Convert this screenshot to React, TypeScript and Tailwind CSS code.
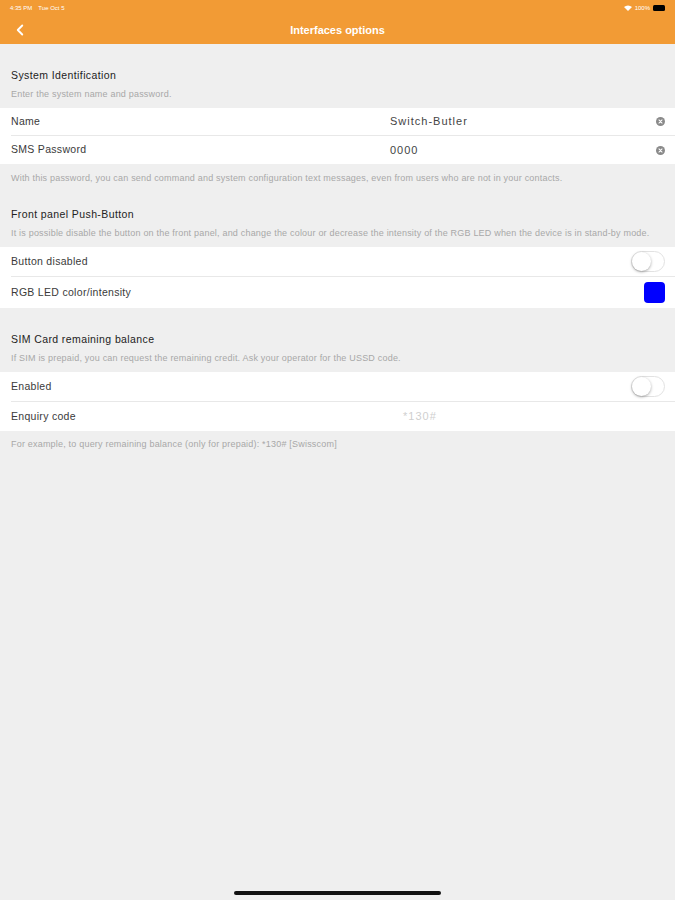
import { ChevronLeft } from 'lucide-react';

const font = { fontFamily: '"Liberation Sans", Arial, sans-serif' };

function ClearIcon() {
  return (
    <svg width="9" height="9" viewBox="0 0 10 10">
      <circle cx="5" cy="5" r="5" fill="#8a8a8a" />
      <path d="M3.3 3.3 L6.7 6.7 M6.7 3.3 L3.3 6.7" stroke="#fff" strokeWidth="1.2" strokeLinecap="round" />
    </svg>
  );
}

function Toggle() {
  return (
    <div className="w-[34px] h-[21px] rounded-full border border-[#e2e2e2] bg-white relative">
      <div className="absolute left-0 top-0 w-[19px] h-[19px] rounded-full bg-white shadow-[0_1px_3px_rgba(0,0,0,0.35)]" />
    </div>
  );
}

function Header({ title, sub, top = 'pt-[24px]', bottom = 'pb-[8px]' }: { title: string; sub: string; top?: string; bottom?: string }) {
  return (
    <div className={`px-[11px] ${top} ${bottom}`}>
      <div className="text-[10.5px] leading-[14px] tracking-[0.4px] text-[#222] font-medium">{title}</div>
      <div className="mt-[6px] text-[9px] leading-[12px] tracking-[0.2px] text-[#a8a8a8] whitespace-nowrap">{sub}</div>
    </div>
  );
}

function Row({ label, h, divider, children }: { label: string; h: string; divider?: boolean; children?: React.ReactNode }) {
  return (
    <div className={`bg-white pl-[11px] ${h}`}>
      <div className={`h-full flex items-center pr-[10px] ${divider ? 'border-b border-[#e8e8e8]' : ''}`}>
        <div className="w-[379px] text-[10.5px] tracking-[0.3px] text-[#3a3a3a]">{label}</div>
        <div className="flex-1 flex items-center justify-between">{children}</div>
      </div>
    </div>
  );
}

function App() {
  return (
    <div className="min-h-[900px] bg-[#efefef] flex flex-col" style={font}>
      {/* status + nav */}
      <div className="bg-[#f29b35]">
        <div className="h-[16px] flex items-center justify-between px-[10px] text-[6px] text-white">
          <div className="flex gap-[6px]">
            <span>4:35 PM</span>
            <span>Tue Oct 5</span>
          </div>
          <div className="flex items-center gap-[3px]">
            <svg width="8" height="6" viewBox="0 0 8 6">
              <path d="M4 6 L0 2 A6 6 0 0 1 8 2 Z" fill="#fff" />
            </svg>
            <span>100%</span>
            <div className="w-[12px] h-[6px] rounded-[1.5px] bg-black" />
          </div>
        </div>
        <div className="h-[28px] relative flex items-center justify-center">
          <ChevronLeft className="absolute left-[11px] text-white" size={18} strokeWidth={2.5} />
          <span className="text-[11px] font-bold text-white">Interfaces options</span>
        </div>
      </div>

      <Header title="System Identification" sub="Enter the system name and password." />
      <Row label="Name" h="h-[28px]" divider>
        <span className="text-[11px] tracking-[1px] text-[#444]">Switch-Butler</span>
        <ClearIcon />
      </Row>
      <Row label="SMS Password" h="h-[28px]">
        <span className="text-[11px] tracking-[1px] text-[#444]">0000</span>
        <ClearIcon />
      </Row>
      <div className="px-[11px] pt-[8px] text-[9px] leading-[12px] tracking-[0.2px] text-[#a8a8a8] whitespace-nowrap">
        With this password, you can send command and system configuration text messages, even from users who are not in your contacts.
      </div>

      <Header
        title="Front panel Push-Button"
        sub="It is possible disable the button on the front panel, and change the colour or decrease the intensity of the RGB LED when the device is in stand-by mode."
        top="pt-[23px]"
      />
      <Row label="Button disabled" h="h-[30px]" divider>
        <span />
        <Toggle />
      </Row>
      <Row label="RGB LED color/intensity" h="h-[31px]">
        <span />
        <div className="w-[21px] h-[21px] rounded-[4px] bg-[#0000ff]" />
      </Row>

      <Header
        title="SIM Card remaining balance"
        sub="If SIM is prepaid, you can request the remaining credit. Ask your operator for the USSD code."
      />
      <Row label="Enabled" h="h-[30px]" divider>
        <span />
        <Toggle />
      </Row>
      <Row label="Enquiry code" h="h-[29px]">
        <span className="pl-[13px] text-[11px] tracking-[1px] text-[#cfcfcf]">*130#</span>
      </Row>
      <div className="px-[11px] pt-[7px] text-[9px] leading-[12px] tracking-[0.2px] text-[#a8a8a8] whitespace-nowrap">
        For example, to query remaining balance (only for prepaid): *130# [Swisscom]
      </div>

      <div className="flex-1" />
      <div className="flex justify-center pb-[5px]">
        <div className="w-[207px] h-[4px] rounded-full bg-[#111]" />
      </div>
    </div>
  );
}

export default App;
